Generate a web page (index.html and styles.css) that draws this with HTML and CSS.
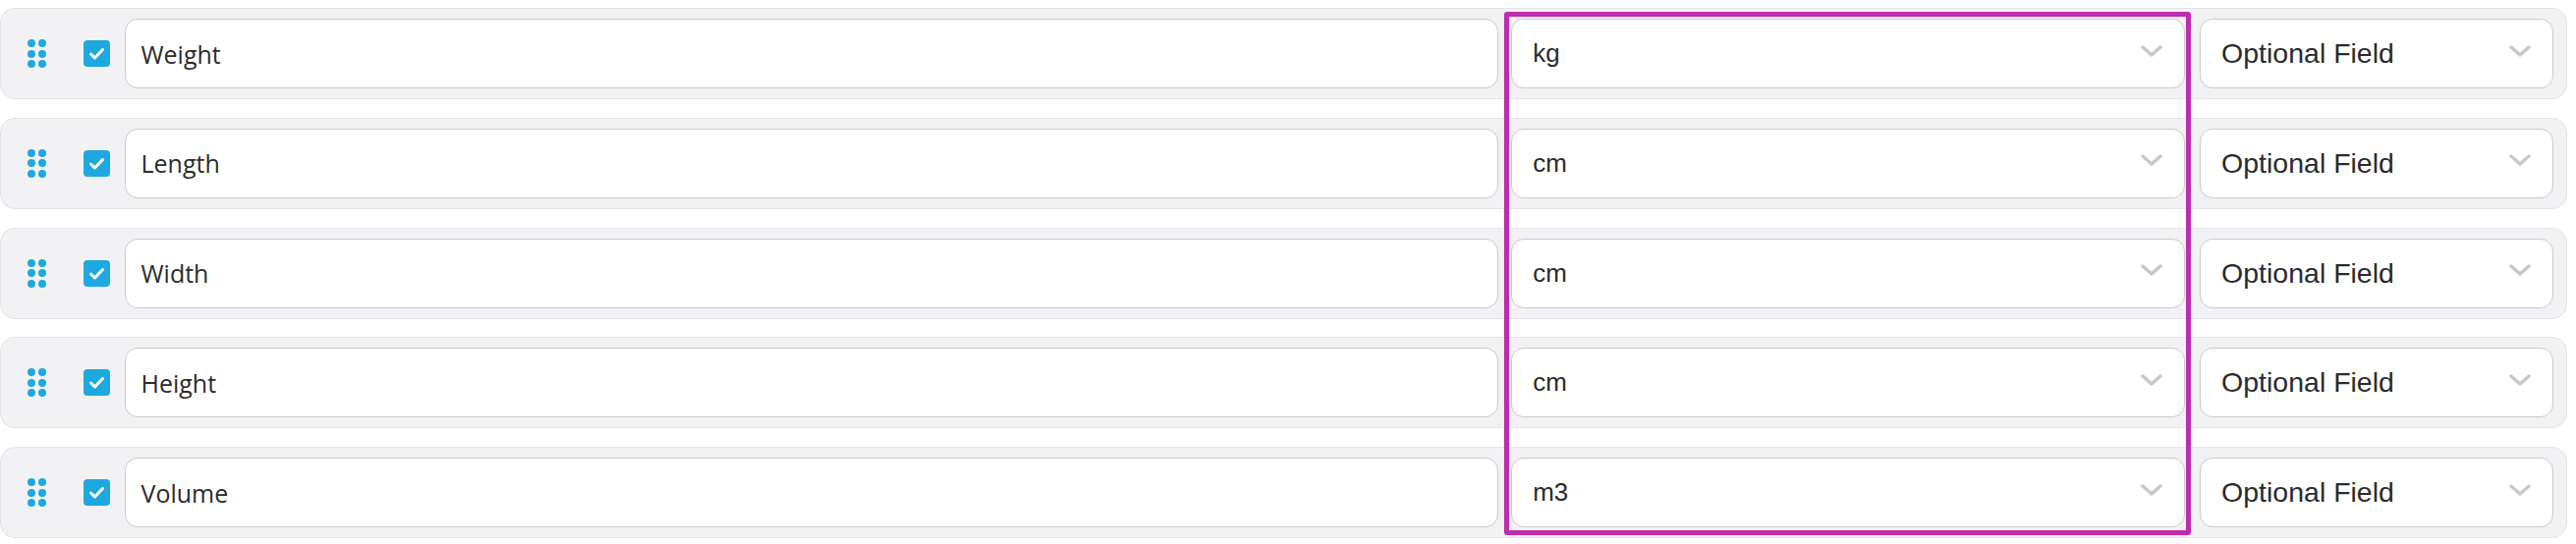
FILE: index.html
```html
<!DOCTYPE html>
<html lang="en">
<head>
    <meta charset="UTF-8">
    <meta name="viewport" content="width=device-width, initial-scale=1.0">
    <title>Field Settings</title>
    <link rel="stylesheet" href="styles.css">
</head>
<body>
    <!-- Field list -->
    <section class="field-list">
        <div class="field-row">
            <div class="drag-handle"><i></i><i></i><i></i><i></i><i></i><i></i></div>
            <span class="check"><svg viewBox="0 0 27 27"><path d="M7.5 14 L11.5 18 L19.5 9.5"/></svg></span>
            <div class="name-input">Weight</div>
            <div class="select unit-select"><span>kg</span><svg class="chevron" viewBox="0 0 22 12"><path d="M2 2 L11 10 L20 2"/></svg></div>
            <div class="select mode-select"><span>Optional Field</span><svg class="chevron" viewBox="0 0 22 12"><path d="M2 2 L11 10 L20 2"/></svg></div>
        </div>
        <div class="field-row">
            <div class="drag-handle"><i></i><i></i><i></i><i></i><i></i><i></i></div>
            <span class="check"><svg viewBox="0 0 27 27"><path d="M7.5 14 L11.5 18 L19.5 9.5"/></svg></span>
            <div class="name-input">Length</div>
            <div class="select unit-select"><span>cm</span><svg class="chevron" viewBox="0 0 22 12"><path d="M2 2 L11 10 L20 2"/></svg></div>
            <div class="select mode-select"><span>Optional Field</span><svg class="chevron" viewBox="0 0 22 12"><path d="M2 2 L11 10 L20 2"/></svg></div>
        </div>
        <div class="field-row">
            <div class="drag-handle"><i></i><i></i><i></i><i></i><i></i><i></i></div>
            <span class="check"><svg viewBox="0 0 27 27"><path d="M7.5 14 L11.5 18 L19.5 9.5"/></svg></span>
            <div class="name-input">Width</div>
            <div class="select unit-select"><span>cm</span><svg class="chevron" viewBox="0 0 22 12"><path d="M2 2 L11 10 L20 2"/></svg></div>
            <div class="select mode-select"><span>Optional Field</span><svg class="chevron" viewBox="0 0 22 12"><path d="M2 2 L11 10 L20 2"/></svg></div>
        </div>
        <div class="field-row">
            <div class="drag-handle"><i></i><i></i><i></i><i></i><i></i><i></i></div>
            <span class="check"><svg viewBox="0 0 27 27"><path d="M7.5 14 L11.5 18 L19.5 9.5"/></svg></span>
            <div class="name-input">Height</div>
            <div class="select unit-select"><span>cm</span><svg class="chevron" viewBox="0 0 22 12"><path d="M2 2 L11 10 L20 2"/></svg></div>
            <div class="select mode-select"><span>Optional Field</span><svg class="chevron" viewBox="0 0 22 12"><path d="M2 2 L11 10 L20 2"/></svg></div>
        </div>
        <div class="field-row">
            <div class="drag-handle"><i></i><i></i><i></i><i></i><i></i><i></i></div>
            <span class="check"><svg viewBox="0 0 27 27"><path d="M7.5 14 L11.5 18 L19.5 9.5"/></svg></span>
            <div class="name-input">Volume</div>
            <div class="select unit-select"><span>m3</span><svg class="chevron" viewBox="0 0 22 12"><path d="M2 2 L11 10 L20 2"/></svg></div>
            <div class="select mode-select"><span>Optional Field</span><svg class="chevron" viewBox="0 0 22 12"><path d="M2 2 L11 10 L20 2"/></svg></div>
        </div>

        <!-- Highlight around the unit column -->
        <div class="highlight"></div>
    </section>
</body>
</html>
```

FILE: styles.css
```css
body {
    margin: 0;
    background-color: #fff;
    color: #2b2b2b;
}
.field-list {
    position: relative;
    width: 2613px;
    padding-top: 8px;
}
.field-row {
    display: flex;
    align-items: center;
    box-sizing: border-box;
    height: 93px;
    margin-bottom: 18.75px;
    padding-right: 13px;
    background-color: #f2f2f4;
    border: 1px solid #e3e3e7;
    border-radius: 15px;
}
.drag-handle {
    display: grid;
    grid-template-columns: 8px 8px;
    gap: 2.5px 2.5px;
    margin-left: 27px;
}
.drag-handle i {
    width: 8px;
    height: 8px;
    border-radius: 50%;
    background-color: #1ea8e0;
}
.check {
    display: flex;
    width: 27px;
    height: 27px;
    margin-left: 38px;
    border-radius: 4px;
    background-color: #1ea8e0;
}
.check svg {
    width: 27px;
    height: 27px;
    fill: none;
    stroke: #fff;
    stroke-width: 3;
    stroke-linecap: round;
    stroke-linejoin: round;
}
.name-input,
.select {
    display: flex;
    align-items: center;
    box-sizing: border-box;
    height: 71px;
    background-color: #fff;
    border: 1px solid #cacace;
    border-radius: 13px;
}
.name-input {
    width: 1399px;
    margin-left: 15px;
    padding-left: 16px;
    font-family: "Open Sans", sans-serif;
    font-size: 25px;
}
.select {
    justify-content: space-between;
    padding: 0 22px 0 21px;
    font-family: "Liberation Sans", Arial, sans-serif;
}
.unit-select {
    width: 686px;
    margin-left: 13px;
    font-size: 26px;
}
.mode-select {
    width: 360px;
    margin-left: 15px;
    font-size: 28.5px;
}
.chevron {
    width: 22px;
    height: 12px;
    margin-top: -6px;
    fill: none;
    stroke: #c8c8c8;
    stroke-width: 3.5;
    stroke-linecap: round;
    stroke-linejoin: round;
}
.highlight {
    position: absolute;
    left: 1531px;
    top: 12px;
    width: 699px;
    height: 533px;
    box-sizing: border-box;
    border: 5px solid #bd2dad;
    border-radius: 3px;
}
```
